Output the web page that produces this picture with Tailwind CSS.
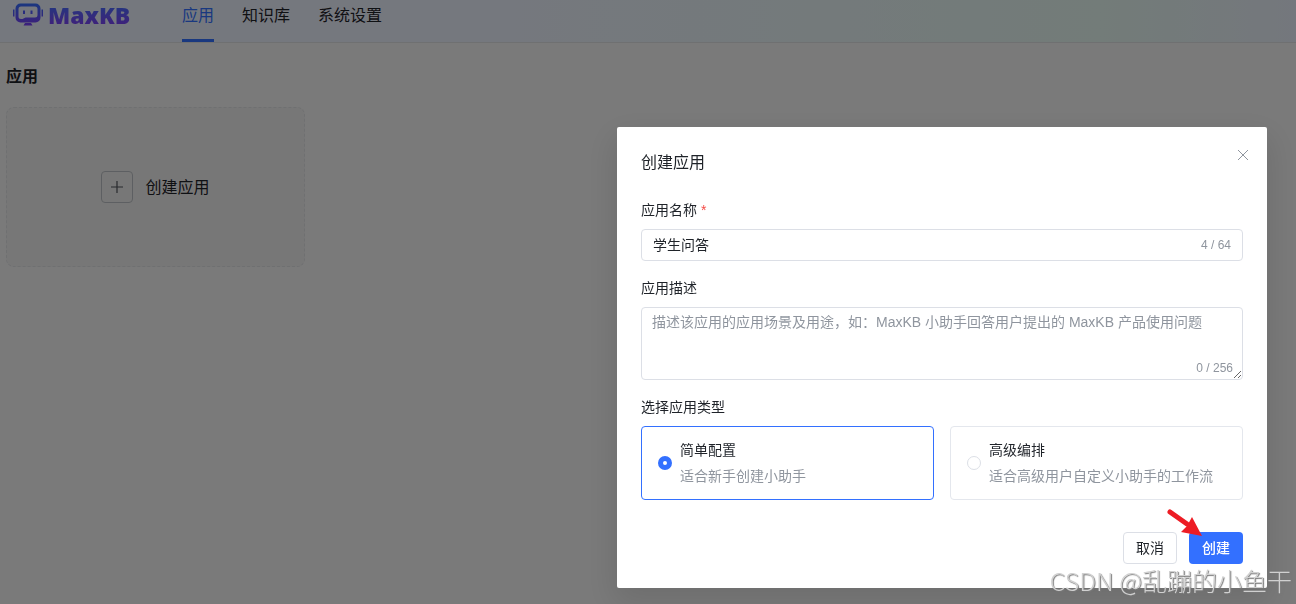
<!DOCTYPE html>
<html lang="zh-CN">
<head>
  <meta charset="UTF-8">
  <title>MaxKB</title>
  <script src="https://cdn.jsdelivr.net/npm/@tailwindcss/browser@4"></script>
</head>
<body class="min-h-screen overflow-hidden bg-[#f5f5f5] font-['Liberation_Sans','Noto_Sans_CJK_SC',sans-serif] text-sm text-[#1f2329]">
  <header class="flex h-[43px] items-start border-b border-[#dee0e3] bg-linear-to-r from-[#ebf0fd] from-35% via-[#e6f8f2] via-85% to-[#e9effa] pl-3">
    <a href="#" class="mt-[3px] flex w-[120px] items-center" aria-label="MaxKB">
      <svg class="h-6 w-8 shrink-0" viewBox="0 0 32 24" fill="none">
        <defs>
          <linearGradient id="logo" x1="0" y1="0" x2="0" y2="24" gradientUnits="userSpaceOnUse">
            <stop stop-color="#3370ff"/>
            <stop offset="1" stop-color="#7f3bf5"/>
          </linearGradient>
        </defs>
        <path fill-rule="evenodd" d="M8.500 0.500h15a5 5 0 0 1 5 5v9a5 5 0 0 1-5 5h-15a5 5 0 0 1-5-5v-9a5 5 0 0 1 5-5zM9 3.500a2.500 2.500 0 0 0-2.500 2.500v7.500a2.500 2.500 0 0 0 2.500 2.500h1.500l3-1.500h9.500a2.500 2.500 0 0 0 2.500-2.500v-6a2.500 2.500 0 0 0-2.500-2.500z" fill="url(#logo)"/>
        <path d="M1 6.500h1.500v7h-1.500zM29.500 6.500h1.500v7h-1.500zM13 20h6l1.500 2.500h-9z" fill="url(#logo)"/>
        <path d="M11 7.500h2v3.500h-2zM18.500 7.500h2v3.500h-2z" fill="url(#logo)"/>
      </svg>
      <span class="ml-1 bg-linear-to-b from-[#3370ff] to-[#7f3bf5] bg-clip-text font-['Noto_Sans',sans-serif] text-[23px] leading-6 font-black text-transparent">MaxKB</span>
    </a>
    <nav class="ml-[50px] flex h-[42px] gap-7 text-base leading-8">
      <a href="#" class="border-b-3 border-[#3370ff] text-[#3370ff]">应用</a>
      <a href="#">知识库</a>
      <a href="#">系统设置</a>
    </nav>
  </header>

  <main class="px-1.5 pt-[22px]">
    <h4 class="text-base leading-6 font-bold">应用</h4>
    <div class="mt-[18px] flex h-40 w-[299px] items-center justify-center rounded-lg border border-dashed border-[#dee0e3] bg-[#efefef]">
      <button type="button" class="flex items-center gap-3 text-base">
        <span class="flex size-8 items-center justify-center rounded-sm border border-[#bbbfc4]">
          <svg class="size-4" viewBox="0 0 16 16" stroke="#50545a" stroke-width="1.200"><path d="M8 2v12M2 8h12"/></svg>
        </span>
        <span class="pt-0.5">创建应用</span>
      </button>
    </div>
  </main>

  <!-- Create application dialog -->
  <div class="fixed inset-0 flex items-start justify-end bg-black/50 pt-[127px] pr-[29px]">
    <form class="relative w-[650px] rounded-xs bg-white p-6 shadow-[0_12px_32px_4px_rgba(0,0,0,0.1)]" role="dialog" aria-labelledby="title">
      <div class="flex h-6 items-start justify-between">
        <h4 id="title" class="text-base leading-6">创建应用</h4>
        <button type="button" aria-label="关闭" class="-mt-1 -mr-2 size-4">
          <svg class="size-4" viewBox="0 0 16 16" stroke="#8f959e"><path d="M3 3l10 10M13 3L3 13"/></svg>
        </button>
      </div>

      <label for="name" class="mt-6 block leading-[22px]">应用名称 <span class="text-[#f54a45]">*</span></label>
      <div class="mt-2 flex h-8 items-center rounded-sm border border-[#dcdfe6] px-[11px]">
        <input id="name" type="text" maxlength="64" value="学生问答" class="min-w-0 flex-1 outline-none">
        <span class="text-xs text-[#8f959e]">4 / 64</span>
      </div>

      <label for="desc" class="mt-4 block leading-[22px]">应用描述</label>
      <div class="relative mt-2">
        <textarea id="desc" maxlength="256" placeholder="描述该应用的应用场景及用途，如：MaxKB 小助手回答用户提出的 MaxKB 产品使用问题" class="block h-[73px] w-full resize-y rounded-sm border border-[#dcdfe6] px-2.5 py-1 leading-[21px] outline-none placeholder:text-[#8f959e]"></textarea>
        <span class="pointer-events-none absolute right-2.5 bottom-1 text-xs text-[#8f959e]">0 / 256</span>
      </div>

      <fieldset class="mt-4">
        <legend class="leading-[22px]">选择应用类型</legend>
        <div class="mt-2 grid grid-cols-2 gap-4">
          <label class="flex h-[74px] items-center rounded-sm border border-[#3370ff] px-4">
            <input type="radio" name="type" checked class="size-3.5 shrink-0 appearance-none rounded-full border border-[#dcdfe6] bg-white checked:border-5 checked:border-[#3370ff]">
            <span class="ml-2">
              <span class="block leading-[22px]">简单配置</span>
              <span class="mt-1 block leading-[22px] text-[#8f959e]">适合新手创建小助手</span>
            </span>
          </label>
          <label class="flex h-[74px] items-center rounded-sm border border-[#e4e7ed] px-4">
            <input type="radio" name="type" class="size-3.5 shrink-0 appearance-none rounded-full border border-[#dcdfe6] bg-white checked:border-5 checked:border-[#3370ff]">
            <span class="ml-2">
              <span class="block leading-[22px]">高级编排</span>
              <span class="mt-1 block leading-[22px] text-[#8f959e]">适合高级用户自定义小助手的工作流</span>
            </span>
          </label>
        </div>
      </fieldset>

      <div class="mt-8 flex justify-end gap-3">
        <button type="button" class="h-8 w-[54px] rounded-sm border border-[#dcdfe6]">取消</button>
        <button type="submit" class="h-8 w-[54px] rounded-sm bg-[#3370ff] font-medium text-white">创建</button>
      </div>

      <svg class="absolute right-16 bottom-[51px] h-7 w-9" viewBox="0 0 36 28" fill="#ed1c24">
        <path d="M3 3L20 15" stroke="#ed1c24" stroke-width="5" stroke-linecap="round"/>
        <path d="M25 8L35 27L14 23L20 17z"/>
      </svg>
    </form>
  </div>

  <div class="fixed right-1 bottom-1.5 font-['Noto_Sans_CJK_SC',sans-serif] text-[25px] leading-9 font-light text-[#d0d0d0] [text-shadow:1px_1px_1px_#777]">CSDN @乱蹦的小鱼干</div>
</body>
</html>
